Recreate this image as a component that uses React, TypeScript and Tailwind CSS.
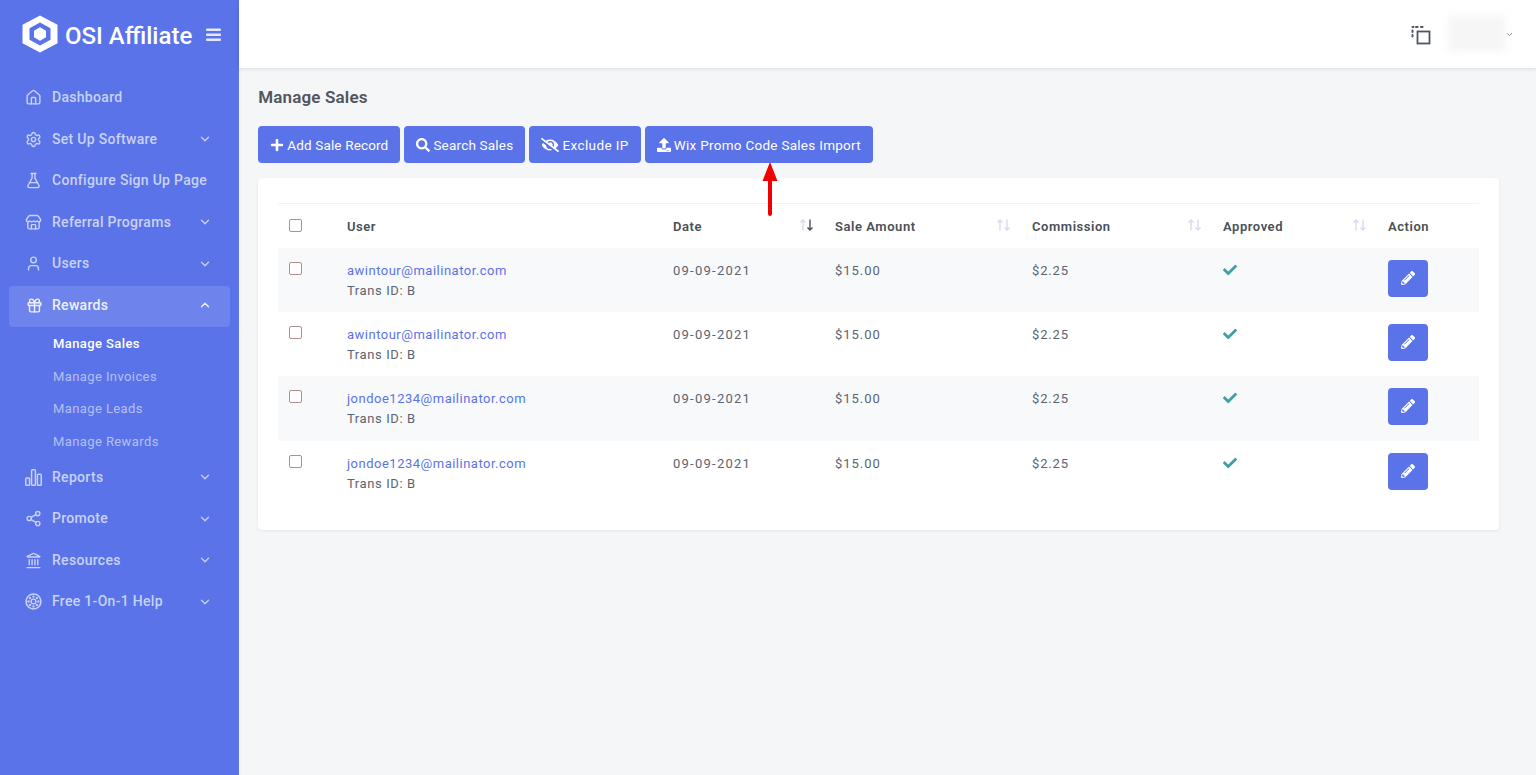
import { ChevronDown, ChevronUp, FlaskConical, Gift, Home, Landmark, Settings, Share2, Store, User } from 'lucide-react'
import type { SVGProps } from 'react'
import { FaCheck, FaEyeSlash, FaPencilAlt, FaPlus, FaSearch, FaUpload } from 'react-icons/fa'

const font = { fontFamily: 'Roboto, "Noto Sans", sans-serif' }

function BarsIcon({ size = 16, strokeWidth = 2, ...rest }: SVGProps<SVGSVGElement> & { size?: number; strokeWidth?: number }) {
  return (
    <svg width={size} height={size} viewBox="0 0 16 16" fill="none" stroke="currentColor" strokeWidth={strokeWidth * 0.7} {...rest}>
      <rect x="0.7" y="8.5" width="3.6" height="6.8" rx="0.8" />
      <rect x="6.2" y="0.7" width="3.6" height="14.6" rx="0.8" />
      <rect x="11.7" y="5" width="3.6" height="10.3" rx="0.8" />
    </svg>
  )
}

function HelpIcon({ size = 16, ...rest }: SVGProps<SVGSVGElement> & { size?: number; strokeWidth?: number }) {
  const { strokeWidth: _ignored, ...svgProps } = rest
  return (
    <svg width={size} height={size} viewBox="0 0 16 16" fill="none" stroke="currentColor" {...svgProps}>
      <circle cx="8" cy="8" r="7" strokeWidth="1.5" />
      <circle cx="8" cy="8" r="2.2" strokeWidth="1.3" />
      <g fill="currentColor" stroke="none">
        <circle cx="8" cy="3.4" r="1.1" />
        <circle cx="8" cy="12.6" r="1.1" />
        <circle cx="3.4" cy="8" r="1.1" />
        <circle cx="12.6" cy="8" r="1.1" />
        <circle cx="4.8" cy="4.8" r="1.1" />
        <circle cx="11.2" cy="4.8" r="1.1" />
        <circle cx="4.8" cy="11.2" r="1.1" />
        <circle cx="11.2" cy="11.2" r="1.1" />
      </g>
    </svg>
  )
}

const topNav = [
  { label: 'Dashboard', icon: Home, arrow: false },
  { label: 'Set Up Software', icon: Settings, arrow: true },
  { label: 'Configure Sign Up Page', icon: FlaskConical, arrow: false },
  { label: 'Referral Programs', icon: Store, arrow: true },
  { label: 'Users', icon: User, arrow: true },
]

const bottomNav = [
  { label: 'Reports', icon: BarsIcon },
  { label: 'Promote', icon: Share2 },
  { label: 'Resources', icon: Landmark },
  { label: 'Free 1-On-1 Help', icon: HelpIcon },
]

const subNav = ['Manage Sales', 'Manage Invoices', 'Manage Leads', 'Manage Rewards']

const rows = [
  'awintour@mailinator.com',
  'awintour@mailinator.com',
  'jondoe1234@mailinator.com',
  'jondoe1234@mailinator.com',
]

function NavRow({ label, icon: Icon, arrow }: { label: string; icon: any; arrow: boolean }) {
  return (
    <a className="flex h-[41.5px] items-center pl-[25px] pr-[27.5px] text-[#c9d2f8]">
      <Icon size={17} strokeWidth={2} className="mr-[10px] shrink-0" />
      <span className="flex-1 text-[14px] font-medium tracking-[0.3px]">{label}</span>
      {arrow && <ChevronDown size={14} strokeWidth={2.2} />}
    </a>
  )
}

function Sidebar() {
  return (
    <aside className="flex w-[239.3px] shrink-0 flex-col bg-[#5a73e8]">
      <div className="flex h-[68px] items-center pl-[22px] pr-[18px] text-white">
        <svg width="36" height="38" viewBox="0 0 36 40" preserveAspectRatio="none" className="shrink-0">
          <path fillRule="evenodd" fill="#fff" d="M18 0.5 35.5 10.2V29.8L18 39.5 0.5 29.8V10.2ZM18 8 7.5 14V26L18 32 28.5 26V14Z" />
          <path fill="#fff" d="M18 13 24 16.5V23.5L18 27 12 23.5V16.5Z" />
        </svg>
        <span className="ml-[7px] mt-[3px] flex-1 text-[24px] font-medium leading-none">OSI Affiliate</span>
        <svg width="15" height="14" viewBox="0 0 15 14" fill="#e4e8fb" className="mt-[1px]">
          <rect y="0.5" width="15" height="2.6" rx="1" />
          <rect y="5.5" width="15" height="2.6" rx="1" />
          <rect y="10.5" width="15" height="2.6" rx="1" />
        </svg>
      </div>
      <nav className="pt-[9px]">
        {topNav.map((item) => (
          <NavRow key={item.label} {...item} />
        ))}
        <a className="mx-[9px] mt-[1px] flex h-[41px] items-center rounded-[4px] bg-[#6e84ec] pb-[2px] pl-[17px] pr-[18.5px] text-[#eef1fd]">
          <Gift size={17} strokeWidth={2} className="mr-[9px] shrink-0" />
          <span className="flex-1 text-[14px] font-medium tracking-[0.3px]">Rewards</span>
          <ChevronUp size={14} strokeWidth={2.4} />
        </a>
        <div className="pt-[1.3px] pb-0">
          {subNav.map((name, i) => (
            <a
              key={name}
              className={`flex h-[32.5px] items-center pl-[53px] text-[13px] tracking-[0.4px] ${i === 0 ? 'font-medium text-white' : 'text-[#b4c0f5]'}`}
            >
              {name}
            </a>
          ))}
        </div>
        <div className="-mt-[1.2px]">
          {bottomNav.map((item) => (
            <NavRow key={item.label} {...item} arrow />
          ))}
        </div>
      </nav>
    </aside>
  )
}

function SortIcon({ active }: { active?: boolean }) {
  return (
    <svg width="15" height="12" viewBox="0 0 15 12" fill="none" strokeWidth="1.4" className="-mr-[3px] mb-[3px] shrink-0">
      <path d="M4 11.5V1M1.5 3.5 4 1l2.5 2.5" stroke="#e3d5ef" />
      <path d="M11 0.5V11M8.5 8.5 11 11l2.5-2.5" stroke={active ? '#495264' : '#e3d5ef'} />
    </svg>
  )
}

function Check() {
  return <span className="block h-[13px] w-[13px] rounded-[2px] border border-[#b08f8f] bg-white" />
}

function Head({ label, sort, active }: { label: string; sort?: boolean; active?: boolean }) {
  return (
    <th className="px-[12px] pt-[1px] text-left align-middle font-semibold tracking-[0.55px]">
      <div className="flex items-center justify-between">
        <span>{label}</span>
        {sort && <SortIcon active={active} />}
      </div>
    </th>
  )
}

function SalesTable() {
  return (
    <table className="w-full table-fixed border-collapse text-[13px] tracking-[0.48px] text-[#5b6470]">
      <colgroup>
        <col className="w-[57px]" />
        <col className="w-[326px]" />
        <col className="w-[162px]" />
        <col className="w-[197px]" />
        <col className="w-[191px]" />
        <col className="w-[165px]" />
        <col className="w-[103px]" />
      </colgroup>
      <thead>
        <tr className="h-[44px] border-t border-[#eff2f7] text-[#495057]">
          <th className="pl-[11px] align-middle">
            <div className="mb-[1px]"><Check /></div>
          </th>
          <Head label="User" />
          <Head label="Date" sort active />
          <Head label="Sale Amount" sort />
          <Head label="Commission" sort />
          <Head label="Approved" sort />
          <Head label="Action" />
        </tr>
      </thead>
      <tbody>
        {rows.map((email, i) => (
          <tr key={i} className={`${i === 2 ? 'h-[65px]' : 'h-[64px]'} ${i % 2 === 0 ? 'bg-[#f8f9fb]' : 'bg-white'}`}>
            <td className="pl-[11px] pt-[14px] align-top"><Check /></td>
            <td className="px-[12px] pt-[13px] align-top leading-[20px]">
              <a className="block tracking-[0.5px] text-[#5a73e8]">{email}</a>
              <span className="tracking-[0.6px]">Trans ID: B</span>
            </td>
            <td className="px-[12px] pt-[13px] align-top leading-[20px] tracking-[1.25px]">09-09-2021</td>
            <td className="px-[12px] pt-[13px] align-top leading-[20px] tracking-[0.95px]">$15.00</td>
            <td className="px-[12px] pt-[13px] align-top leading-[20px] tracking-[0.85px]">$2.25</td>
            <td className="px-[12px] pt-[15px] align-top">
              <FaCheck size={14} className="text-[#3f9fa5]" />
            </td>
            <td className="px-[12px] align-top pt-[12px]">
              <button className="flex h-[37px] w-[40px] items-center justify-center rounded-[4px] bg-[#5a73e8] text-white">
                <FaPencilAlt size={14} />
              </button>
            </td>
          </tr>
        ))}
      </tbody>
    </table>
  )
}

const actions = [
  { label: 'Add Sale Record', icon: FaPlus, size: 14, spacing: 'tracking-[0.15px]' },
  { label: 'Search Sales', icon: FaSearch, size: 14, spacing: 'tracking-[0.2px]' },
  { label: 'Exclude IP', icon: FaEyeSlash, size: 18, spacing: 'tracking-[0.4px]' },
  { label: 'Wix Promo Code Sales Import', icon: FaUpload, size: 14, spacing: 'tracking-[0.28px]' },
]

export default function App() {
  return (
    <div className="flex h-[775px] w-[1536px] overflow-hidden bg-[#f5f6f8]" style={font}>
      <Sidebar />
      <div className="flex min-w-0 flex-1 flex-col">
        <header className="flex h-[68px] items-center justify-end bg-white pr-[22.5px] shadow-[0_1px_4px_rgba(18,38,63,0.12)]">
          <svg width="20" height="20" viewBox="0 0 20 20" fill="none" className="mr-[17px] mt-[1px]">
            <path d="M1.5 2h1M5 2h2M10 2h2M1.5 5.5v2M1.5 10v2" stroke="#4f5566" strokeWidth="2" strokeLinecap="round" strokeDasharray="1.6 1.6" />
            <rect x="6.5" y="6.5" width="12" height="12" stroke="#4f5566" strokeWidth="1.8" />
          </svg>
          <div className="h-[36px] w-[58px] bg-[#f6f6f6] blur-[4px]" />
          <ChevronDown size={9} strokeWidth={2.4} className="-ml-[1px] text-[#5b6470]" />
        </header>
        <main className="px-[19px] pt-[19px]">
          <h1 className="text-[17px] font-semibold leading-[20px] tracking-[0.15px] text-[#50555e]">Manage Sales</h1>
          <div className="mt-[19px] flex gap-[4px]">
            {actions.map(({ label, icon: Icon, size, spacing }) => (
              <button
                key={label}
                className={`flex h-[37px] items-center gap-[3px] rounded-[4px] bg-[#5a73e8] px-[12px] pt-[1px] text-[13.5px] text-white ${spacing}`}
              >
                <Icon size={size} />
                {label}
              </button>
            ))}
          </div>
          <div className="relative mt-[15px] h-[352px] w-[1240.4px] rounded-[4px] bg-white pl-[19.7px] pr-[20px] pt-[25px] shadow-[0_1px_3px_rgba(18,38,63,0.08)]">
            <SalesTable />
            <svg width="16" height="54" viewBox="0 0 16 54" className="absolute left-[503.7px] top-[-16px]">
              <path d="M8 0 15.5 19H10V52a2 2 0 0 1-4 0V19H0.5Z" fill="#f00000" />
            </svg>
          </div>
        </main>
      </div>
    </div>
  )
}
